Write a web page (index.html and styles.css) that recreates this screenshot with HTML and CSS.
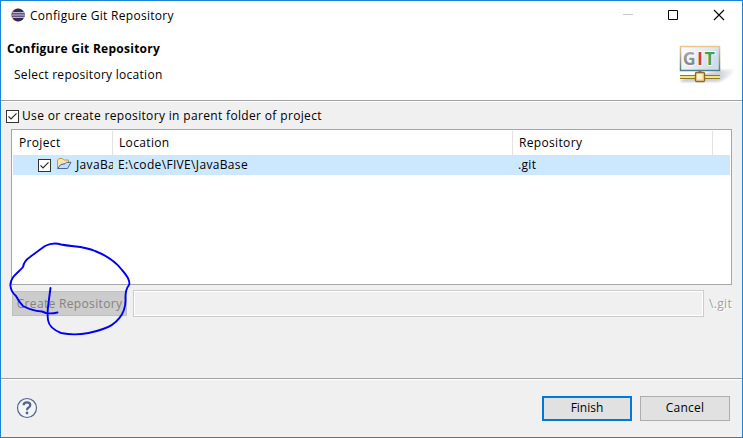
FILE: index.html
```html
<!DOCTYPE html>
<html lang="en">
<head>
<meta charset="utf-8">
<title>Configure Git Repository</title>
<link rel="stylesheet" href="styles.css">
</head>
<body>
<div class="window">
  <header class="titlebar">
    <svg class="app-icon" width="14" height="14" viewBox="0 0 14 14">
      <circle cx="6.4" cy="7" r="6.4" fill="#f0a04a"/>
      <circle cx="7.3" cy="7" r="6.5" fill="#30285e"/>
      <path d="M1.5 4.8H13M1 7H13.6M1.5 9.2H13" stroke="#e8e8f2" stroke-width="1.1"/>
    </svg>
    <span class="caption">Configure Git Repository</span>
    <svg class="controls" width="102" height="12" viewBox="0 0 102 12">
      <path d="M0 5.5H10" stroke="#c8c8c8"/>
      <path d="M45.5 1.5H54.5V10.5H45.5Z" fill="none" stroke="#000"/>
      <path d="M91 1L101 11M101 1L91 11" stroke="#000" stroke-width="1.1"/>
    </svg>
  </header>
  <section class="banner">
    <div>
      <h1>Configure Git Repository</h1>
      <p>Select repository location</p>
    </div>
    <svg class="git" width="60" height="40" viewBox="0 0 60 40">
      <defs>
        <linearGradient id="panel" x1="0" y1="0" x2="1" y2="0.4"><stop offset="0" stop-color="#fff"/><stop offset="1" stop-color="#cfdcec"/></linearGradient>
        <linearGradient id="frame" x1="0" y1="0" x2="0" y2="1"><stop offset="0" stop-color="#efc58f"/><stop offset="1" stop-color="#517f86"/></linearGradient>
        <linearGradient id="shade" x1="0" y1="0" x2="1" y2="0"><stop offset="0" stop-color="#a9a8bd"/><stop offset="0.7" stop-color="#b9b8c8"/><stop offset="1" stop-color="#fff"/></linearGradient>
        <linearGradient id="letter-g" x1="0" y1="0" x2="0" y2="1"><stop offset="0" stop-color="#b6b6b6"/><stop offset="1" stop-color="#777"/></linearGradient>
        <filter id="soft"><feGaussianBlur stdDeviation="0.8"/></filter>
      </defs>
      <path d="M41 25L57 24Q51 33 39 37H3L1 35Z" fill="url(#shade)" opacity="0.65" filter="url(#soft)"/>
      <rect x="1.5" y="1.5" width="39" height="24" fill="url(#panel)" stroke="url(#frame)" stroke-width="1.5"/>
      <g class="git-letters">
        <text x="3.7" y="19.8" fill="url(#letter-g)">G</text>
        <text x="18" y="19.8" fill="#c43e46">I</text>
        <text x="25.4" y="19.8" fill="#46a151">T</text>
      </g>
      <path d="M1 32H41" stroke="#8d7b25" stroke-width="4"/>
      <path d="M1 32H41" stroke="#f3e583" stroke-width="2"/>
      <path d="M21 26V28" stroke="#8d7b25" stroke-width="3"/>
      <rect x="16.5" y="27.5" width="9" height="9" rx="1" fill="#f6dfa0" stroke="#8d6b22" stroke-width="1.4"/>
      <rect x="18" y="29" width="5" height="5" fill="#fff1cc"/>
    </svg>
  </section>
  <main>
    <label class="parent">
      <svg class="check" width="13" height="13" viewBox="0 0 13 13"><rect x=".5" y=".5" width="12" height="12" fill="#fff" stroke="#333"/><path d="M2.5 6.4L5 9L10.5 3.4" fill="none" stroke="#222" stroke-width="1.1"/></svg>
      <span>Use or create repository in parent folder of project</span>
    </label>
    <div class="table">
      <div class="row head">
        <div class="cell"><span>Project</span></div>
        <div class="cell"><span>Location</span></div>
        <div class="cell"><span>Repository</span></div>
      </div>
      <div class="row selected">
        <div class="cell first">
          <svg class="check" width="13" height="13" viewBox="0 0 13 13"><rect x=".5" y=".5" width="12" height="12" fill="#fff" stroke="#333"/><path d="M2.5 6.4L5 9L10.5 3.4" fill="none" stroke="#222" stroke-width="1.1"/></svg>
          <svg class="folder" width="16" height="13" viewBox="0 0 16 13">
            <path d="M1.500 11V3L3 1.500H6.500L8 3H12.500V6L9 7L5 7.500L2 11Z" fill="#f9e6ad" stroke="#c09a58"/>
            <path d="M1.500 11.500L5 7.500L9 6.800L10.500 5.300H15L11.500 11.500Z" fill="#c8def8" stroke="#4468a8"/>
          </svg>
          <span>JavaBa</span>
        </div>
        <div class="cell"><span>E:\code\FIVE\JavaBase</span></div>
        <div class="cell"><span>.git</span></div>
      </div>
    </div>
    <div class="create">
      <div class="button disabled"><span>Create Repository</span></div>
      <div class="field"></div>
      <span class="suffix">\.git</span>
    </div>
  </main>
  <footer>
    <svg width="22" height="22" viewBox="0 0 22 22">
      <circle cx="11" cy="11" r="9.5" fill="#f3f5f8" stroke="#53658a" stroke-width="1.2"/>
      <path d="M7.6 8.2Q7.7 5.4 11 5.4Q14.3 5.4 14.3 8Q14.3 9.7 12.4 10.7Q11 11.4 11 13.2" fill="none" stroke="#53658a" stroke-width="2.2"/>
      <circle cx="11" cy="16" r="1.4" fill="#53658a"/>
    </svg>
    <div class="button finish"><span>Finish</span></div>
    <div class="button cancel"><span>Cancel</span></div>
  </footer>
  <svg class="scribble" width="130" height="100" viewBox="5 238 130 100">
    <path d="M57.5 312.5Q51 314 46 313L42 311.5Q31 310.500 23 306Q19 302 16 296Q11 292 10.300 285C11 276 18 273 23 267Q24 261 30 257Q38 251 45 246Q53 242 61 244.500C74 247 84 246 95 251Q113 258 122 270Q131 280 129 285Q125 290 125.500 299C126 314 116 325 103 329Q81 337 61 333Q49 328 48 320Q47 313 48.500 303L50.500 288" fill="none" stroke="#0000f4" stroke-width="1.9" stroke-linecap="round" stroke-linejoin="round"/>
  </svg>
</div>
</body>
</html>
```
FILE: styles.css
```css
* { box-sizing: border-box; }
body { margin: 0; font: 12px/16px "Open Sans", "Noto Sans", sans-serif; letter-spacing: .34px; color: #000; }
svg { display: block; flex: none; }
span { white-space: nowrap; }
.window { position: relative; display: flex; flex-direction: column; width: 743px; height: 438px; border: 1px solid #1883d7; background: #f0f0f0; overflow: hidden; }
.titlebar { display: flex; align-items: center; height: 28px; padding: 0 17px 0 10px; background: #fff; }
.caption { margin-left: 5px; padding-top: 1px; letter-spacing: .29px; }
.controls { margin-left: auto; }
.banner { display: flex; justify-content: space-between; height: 72px; padding: 12px 3px 0 6px; background: #fff; border-bottom: 1px solid #a0a0a0; box-shadow: 0 1px #fff; }
h1 { margin: 0; font-size: 12px; line-height: 16px; font-weight: 700; letter-spacing: .26px; }
p { margin: 10px 0 0 7px; letter-spacing: .28px; }
.git { margin-top: 4px; }
.git-letters { font: 700 18px "Open Sans", sans-serif; letter-spacing: 0; stroke: #fff; stroke-width: 1.5px; paint-order: stroke; }
main { padding: 7px 10px 0; }
.parent { display: flex; align-items: center; height: 16px; margin-left: -5px; gap: 3px; }
.table { height: 156px; margin-top: 5px; padding: 1px; border: 1px solid #a4a6ad; background: #fff; }
.row { display: grid; grid-template-columns: 100px 400px 200px 1fr; }
.head { height: 24px; }
.head .cell { border-right: 1px solid #e2e2e2; padding: 4px 6px 0; }
.selected { height: 20px; background: #cce8ff; }
.selected .cell { overflow: hidden; padding: 2px 5px 0; }
.selected .first { display: flex; padding: 2px 0 0 25px; }
.selected .check { margin-top: 2px; }
.folder { margin: 0 4px 0 5px; }
.create { display: flex; align-items: center; height: 27px; margin-top: 5px; }
.button { display: flex; align-items: center; justify-content: center; width: 90px; height: 25px; border: 1px solid #adadad; background: #e1e1e1; }
.disabled { width: 115px; margin-left: 1px; color: #838383; background: #ccc; border-color: #bfbfbf; }
.field { width: 571px; height: 27px; margin-left: 6px; border: 1px solid #ccc; box-shadow: inset 0 0 0 1px #fff; }
.suffix { margin-left: 5px; color: #a0a0a0; text-shadow: 1px 1px #fff; }
footer { display: flex; align-items: center; gap: 8px; height: 59px; margin-top: auto; padding: 0 12px 0 15px; border-top: 1px solid #a0a0a0; box-shadow: inset 0 1px #fff; }
footer svg { margin-right: auto; }
.finish { border: 2px solid #0078d7; letter-spacing: 0; }
.cancel { letter-spacing: .2px; }
.scribble { position: absolute; left: 4px; top: 237px; }
```
